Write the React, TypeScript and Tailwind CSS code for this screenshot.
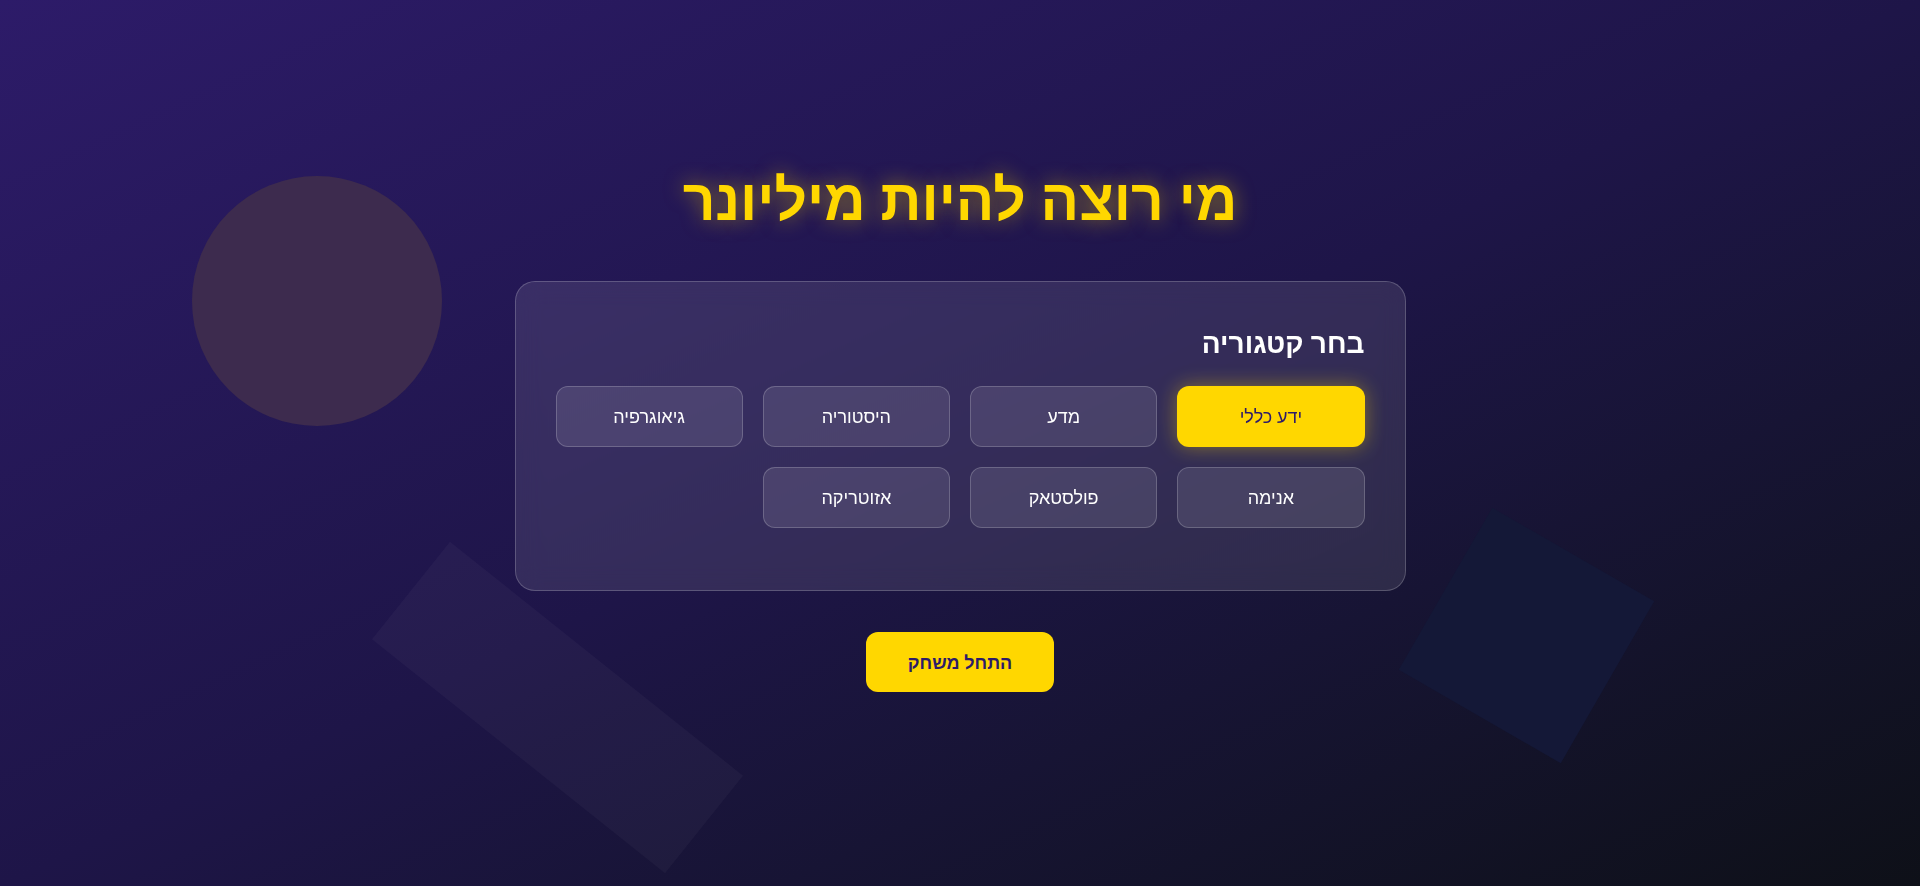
import React, { useState } from 'react';

const categories = ['ידע כללי', 'מדע', 'היסטוריה', 'גיאוגרפיה', 'אנימה', 'פולסטאק', 'אזוטריקה'];

export default function App() {
  const [selected, setSelected] = useState('ידע כללי');

  return (
    <div
      dir="rtl"
      className="relative min-h-screen w-full overflow-hidden bg-gradient-to-br from-[#2d1b69] via-[#1e1548] to-[#0e1018] font-['Noto_Sans',sans-serif]"
    >
      {/* background shapes */}
      <div className="absolute left-[192px] top-[176px] h-[250px] w-[250px] rounded-full bg-[#3d2b4e]" />
      <div className="absolute left-[370px] top-[645px] h-[125px] w-[375px] rotate-[38.6deg] bg-white/[0.03]" />
      <div className="absolute left-[1433px] top-[542px] h-[187px] w-[187px] rotate-[30deg] bg-[#141837]" />

      <div className="relative flex flex-col items-center pt-[170px]">
        <h1 className="text-[57px] leading-none font-bold text-[#ffd700] [text-shadow:0_0_20px_rgba(255,215,0,0.5)]">
          מי רוצה להיות מיליונר
        </h1>

        <div className="mt-[54px] w-[891px] rounded-[20px] border border-white/20 bg-white/10 p-10 backdrop-blur-md">
          <h2 className="mt-1 mb-[26px] text-[28px] leading-[1.2] font-bold text-white">בחר קטגוריה</h2>
          <div className="mb-[22px] grid grid-cols-4 gap-5">
            {categories.map((c) =>
              c === selected ? (
                <button
                  key={c}
                  onClick={() => setSelected(c)}
                  className="h-[61px] rounded-xl bg-[#ffd700] text-lg text-[#2d1b69] shadow-[0_0_20px_rgba(255,215,0,0.4)]"
                >
                  {c}
                </button>
              ) : (
                <button
                  key={c}
                  onClick={() => setSelected(c)}
                  className="h-[61px] rounded-xl border border-white/20 bg-white/10 text-lg text-white"
                >
                  {c}
                </button>
              )
            )}
          </div>
        </div>

        <button className="mt-[41px] h-[60px] rounded-xl bg-[#ffd700] px-[42px] text-lg font-bold text-[#2d1b69]">
          התחל משחק
        </button>
      </div>
    </div>
  );
}
